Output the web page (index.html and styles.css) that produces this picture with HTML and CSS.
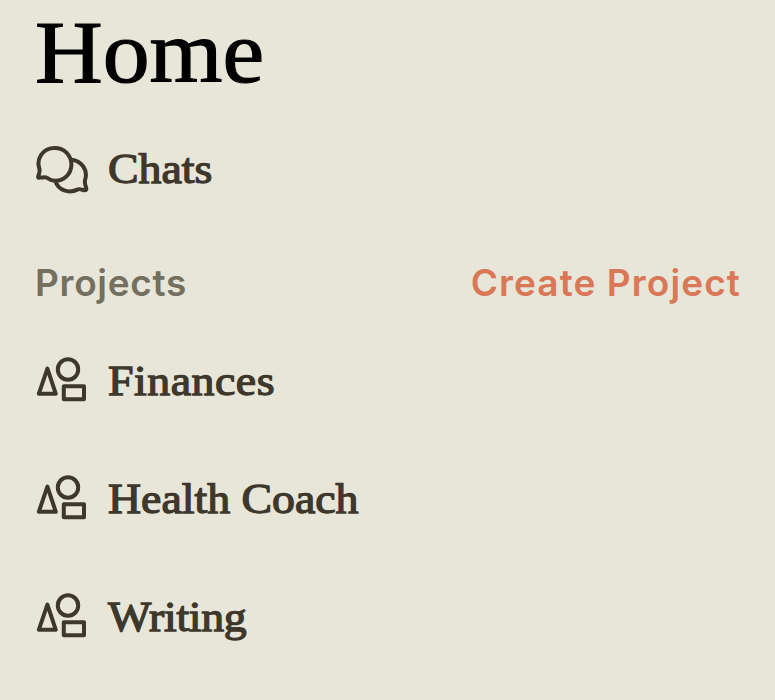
FILE: index.html
```html
<!DOCTYPE html>
<html lang="en">

<head>
    <meta charset="UTF-8">
    <meta name="viewport" content="width=device-width, initial-scale=1.0">
    <title>Home</title>
    <link rel="stylesheet" href="styles.css">
</head>

<body>
    <!-- shared project icon -->
    <svg class="sprite" width="0" height="0">
        <symbol id="shapes" viewBox="0 0 54 54">
            <path d="M12.4 13.6 L20.8 38.8 H3.8 Z" />
            <circle cx="33" cy="14.5" r="10.2" />
            <rect x="28.8" y="31.2" width="20.2" height="13" />
        </symbol>
    </svg>

    <main class="container">
        <h1>Home</h1>

        <a class="item chats">
            <svg class="icon" viewBox="0 0 54 54">
                <path d="M4.6 34.4 C3.2 35.2 2.8 34.3 3.4 32.8 C4.3 30.3 5.2 28 4.3 25.4 C1.3 16.5 7 5 19.8 5 C29.3 5 36.4 12.3 36.4 21.5 C36.4 30.8 29.2 37.8 20.3 37.8 C17 37.8 14.4 36.6 12 34.9 C9.7 33.5 7.2 35.2 4.6 34.4 Z" />
                <path d="M36.4 16.7 C46.2 17.5 53.2 26.8 50.2 36.4 C49.3 39.3 50 41.6 51 44.2 C51.8 46.6 51.2 47.6 49 47.3 C46.8 47 45.2 45.4 43 46.4 C33.6 50.9 23.4 47.3 20.4 38.4" />
            </svg>
            <span class="label">Chats</span>
        </a>

        <div class="section-header">
            <h2>Projects</h2>
            <a class="create">Create Project</a>
        </div>

        <nav class="projects">
            <a class="item">
                <svg class="icon"><use href="#shapes" /></svg>
                <span class="label finances">Finances</span>
            </a>
            <a class="item">
                <svg class="icon"><use href="#shapes" /></svg>
                <span class="label">Health Coach</span>
            </a>
            <a class="item">
                <svg class="icon"><use href="#shapes" /></svg>
                <span class="label writing">Writing</span>
            </a>
        </nav>
    </main>
</body>

</html>
```

FILE: styles.css
```css
:root {
    --background: #E8E6D9;
    --text: #3D382B;
    --muted: #74705F;
    --accent: #D97757;
}

* {
    box-sizing: border-box;
    margin: 0;
    padding: 0;
}

body {
    background: var(--background);
    color: var(--text);
    font-family: 'Liberation Serif', serif;
    height: 100vh;
    overflow: hidden;
}

.sprite {
    display: block;
}

.container {
    padding: 3px 35px 0;
}

h1 {
    width: max-content;
    color: #000;
    font-size: 88px;
    font-weight: 400;
    line-height: 100px;
    transform: scaleX(1.065);
    transform-origin: left;
    -webkit-text-stroke: 1.2px #000;
}

.item {
    display: flex;
    align-items: center;
    gap: 19px;
    height: 54px;
}

.chats {
    margin-top: 40px;
}

.icon {
    width: 54px;
    height: 54px;
    fill: none;
    stroke: currentColor;
    stroke-width: 4;
    stroke-linecap: round;
    stroke-linejoin: round;
}

/* slightly widened serif */
.label {
    font-size: 43px;
    line-height: 52px;
    padding-bottom: 2px;
    transform: scaleX(1.065);
    transform-origin: left;
    -webkit-text-stroke: 1.3px currentColor;
}

.finances {
    letter-spacing: 0.5px;
}

.writing {
    letter-spacing: -0.3px;
}

.section-header {
    display: flex;
    justify-content: space-between;
    margin-top: 62px;
    font-family: Inter, sans-serif;
    font-size: 37px;
    line-height: 48px;
    letter-spacing: 0.7px;
}

h2 {
    color: var(--muted);
    font-size: inherit;
    font-weight: 600;
}

.create {
    color: var(--accent);
    font-weight: 600;
    letter-spacing: 1.1px;
    margin-right: -1px;
}

.projects {
    display: flex;
    flex-direction: column;
    gap: 64px;
    margin-top: 48px;
}
```
